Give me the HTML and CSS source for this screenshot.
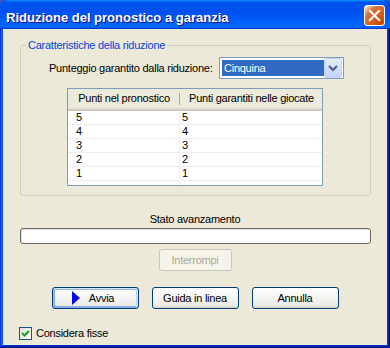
FILE: index.html
```html
<!DOCTYPE html>
<html lang="it">

<head>
    <meta charset="UTF-8">
    <title>Riduzione del pronostico a garanzia</title>
    <link rel="stylesheet" href="styles.css">
</head>

<body>
    <div class="window">
        <div class="titlebar">
            <span class="title">Riduzione del pronostico a garanzia</span>
            <button class="close" aria-label="Chiudi">
                <svg width="19" height="19" viewBox="0 0 19 19">
                    <path d="M5 5 L14 14 M14 5 L5 14" stroke="#fff" stroke-width="2.2" stroke-linecap="square" />
                </svg>
            </button>
        </div>

        <div class="client">
            <fieldset class="group">
                <legend>Caratteristiche della riduzione</legend>
                <div class="field-row">
                    <label>Punteggio garantito dalla riduzione:</label>
                    <div class="combo">
                        <span class="combo-value">Cinquina</span>
                        <span class="combo-btn">
                            <svg width="18" height="20" viewBox="0 0 18 20">
                                <polyline points="5,8 9,12 13,8" fill="none" stroke="#4D6185" stroke-width="2.2" />
                            </svg>
                        </span>
                    </div>
                </div>

                <div class="listview">
                    <div class="lv-head">
                        <span class="c1">Punti nel pronostico</span>
                        <span class="c2">Punti garantiti nelle giocate</span>
                    </div>
                    <div class="lv-row"><span class="c1">5</span><span class="c2">5</span></div>
                    <div class="lv-row"><span class="c1">4</span><span class="c2">4</span></div>
                    <div class="lv-row"><span class="c1">3</span><span class="c2">3</span></div>
                    <div class="lv-row"><span class="c1">2</span><span class="c2">2</span></div>
                    <div class="lv-row"><span class="c1">1</span><span class="c2">1</span></div>
                    <div class="lv-row"><span class="c1"></span><span class="c2"></span></div>
                </div>
            </fieldset>

            <div class="progress-label">Stato avanzamento</div>
            <div class="progress"></div>

            <div class="stop-row">
                <button class="btn stop" disabled>Interrompi</button>
            </div>

            <div class="actions">
                <button class="btn default">
                    <svg width="8" height="14" viewBox="0 0 8 14">
                        <polygon points="0,0 8,7 0,14" fill="#0A0AE6" />
                    </svg>
                    Avvia
                </button>
                <button class="btn">Guida in linea</button>
                <button class="btn">Annulla</button>
            </div>

            <label class="check">
                <span class="box">
                    <svg width="11" height="11" viewBox="0 0 11 11">
                        <polyline points="2,5 4.5,7.5 9,3" fill="none" stroke="#21A121" stroke-width="2" />
                    </svg>
                </span>
                Considera fisse
            </label>
        </div>
    </div>
</body>

</html>
```

FILE: styles.css
```css
* {
    box-sizing: border-box;
}

html,
body {
    margin: 0;
}

body {
    background: #2b5bc6;
    font-family: "Liberation Sans", Arial, sans-serif;
    font-size: 11px;
    letter-spacing: -0.25px;
    color: #000;
}

/* Window frame */
.window {
    width: 390px;
    height: 348px;
    display: flex;
    flex-direction: column;
    background: #0831d9;
    border-radius: 8px 8px 0 0;
    box-shadow: inset -1px -1px #00138c, inset 1px 1px #0831d9,
        inset -2px -2px #001ea0, inset 2px 2px #166aee,
        inset -3px -3px #003bda, inset 3px 3px #0855dd;
    overflow: hidden;
}

.titlebar {
    flex: none;
    height: 29px;
    display: flex;
    align-items: flex-start;
    padding: 5px 5px 0 6px;
    border-radius: 8px 8px 0 0;
    background: linear-gradient(180deg, #0997ff, #0053ee 8%, #0050ee 40%, #06f 88%, #06f 93%, #005bff 95%, #003dd7 96%, #003dd7);
}

.title {
    flex: 1;
    margin-top: 5px;
    font: bold 13px/15px "Liberation Sans", Arial, sans-serif;
    letter-spacing: 0;
    color: #fff;
    text-shadow: 1px 1px #0f1089;
    white-space: nowrap;
}

.close {
    width: 21px;
    height: 21px;
    padding: 0;
    border: 1px solid #fff;
    border-radius: 3px;
    display: flex;
    align-items: center;
    justify-content: center;
    background: radial-gradient(circle at 90% 90%, #cc4600 0%, #dc6527 55%, #cd7546 70%, #ffccb2 90%, #fff 100%);
}

/* Client area */
.client {
    flex: 1;
    margin: 0 3px 3px;
    padding-top: 9px;
    background: #ece9d8;
    display: flex;
    flex-direction: column;
}

.group {
    margin: 0 16px 0 17px;
    padding: 5px 0 9px;
    min-width: 0;
    border: 1px solid #d0d0bf;
    border-radius: 3px;
}

.group legend {
    margin-left: 5px;
    padding: 0 2px;
    line-height: 14px;
    color: #0046d5;
}

.field-row {
    display: flex;
    align-items: center;
    height: 22px;
    padding-left: 28px;
}

.field-row label {
    flex: 0 0 170px;
    white-space: nowrap;
}

.combo {
    width: 125px;
    height: 22px;
    display: flex;
    border: 1px solid #7f9db9;
    background: #fff;
}

.combo-value {
    flex: 1;
    margin: 2px 0 2px 2px;
    padding-left: 2px;
    line-height: 16px;
    background: #316ac5;
    color: #fff;
}

.combo-btn {
    flex: none;
    width: 18px;
    height: 20px;
    margin-right: 1px;
    border: 1px solid #c3d3fd;
    border-radius: 2px;
    background: linear-gradient(180deg, #e6eefc, #c1d3fb);
    display: flex;
}

.combo-btn svg {
    margin: -1px;
}

/* List view */
.listview {
    margin: 9px 0 0 46px;
    width: 256px;
    height: 98px;
    border: 1px solid #7f9db9;
    background: #fff;
    overflow: hidden;
}

.lv-head {
    display: flex;
    height: 22px;
    background: #ebeadb;
    box-shadow: inset 0 -1px #cbc7b8, inset 0 -2px #d6d2c2, inset 0 -3px #e2decd;
    white-space: nowrap;
}

.lv-head span {
    line-height: 19px;
    text-align: center;
    position: relative;
}

.lv-head .c1::after {
    content: "";
    position: absolute;
    right: 0;
    top: 4px;
    bottom: 6px;
    width: 1px;
    background: #aca899;
}

.c1 {
    flex: 0 0 112px;
}

.c2 {
    flex: 0 0 143px;
}

.lv-row {
    display: flex;
    height: 14px;
    line-height: 13px;
    border-bottom: 1px solid #ededed;
}

.lv-row .c1 {
    padding-left: 8px;
    border-right: 1px solid #ededed;
}

.lv-row .c2 {
    padding-left: 2px;
}

/* Progress */
.progress-label {
    margin-top: 17px;
    line-height: 13px;
    text-align: center;
}

.progress {
    margin: 2px 16px 0 17px;
    height: 16px;
    border: 1px solid #686868;
    border-radius: 3px;
    background: #fff;
    box-shadow: inset 1px 1px #e0e0e0;
}

/* Buttons */
.btn {
    width: 87px;
    height: 22px;
    padding: 0;
    font: inherit;
    letter-spacing: inherit;
    color: #000;
    border: 1px solid #003c74;
    border-radius: 3px;
    background: linear-gradient(180deg, #fff, #ecebe6 86%, #d6d0c5);
    display: flex;
    align-items: center;
    justify-content: center;
    gap: 9px;
}

.btn.default {
    box-shadow: inset -1px 1px #cee7ff, inset 1px 2px #98b8ea,
        inset -2px 2px #bcd4f6, inset 1px -1px #89ade4, inset 2px -2px #89ade4;
    padding-right: 4px;
}

.stop-row {
    margin-top: 5px;
    display: flex;
    justify-content: center;
}

.btn.stop {
    width: 73px;
    color: #aca899;
    border-color: #c9c7ba;
    background: #f5f4ea;
}

.actions {
    margin-top: 16px;
    display: flex;
    justify-content: center;
    gap: 13px;
}

/* Checkbox */
.check {
    margin: 18px 0 0 16px;
    display: flex;
    align-items: center;
    gap: 4px;
    line-height: 13px;
}

.check .box {
    width: 13px;
    height: 13px;
    border: 1px solid #1c5180;
    background: linear-gradient(135deg, #dcdcd7, #fff);
    display: flex;
}
```
